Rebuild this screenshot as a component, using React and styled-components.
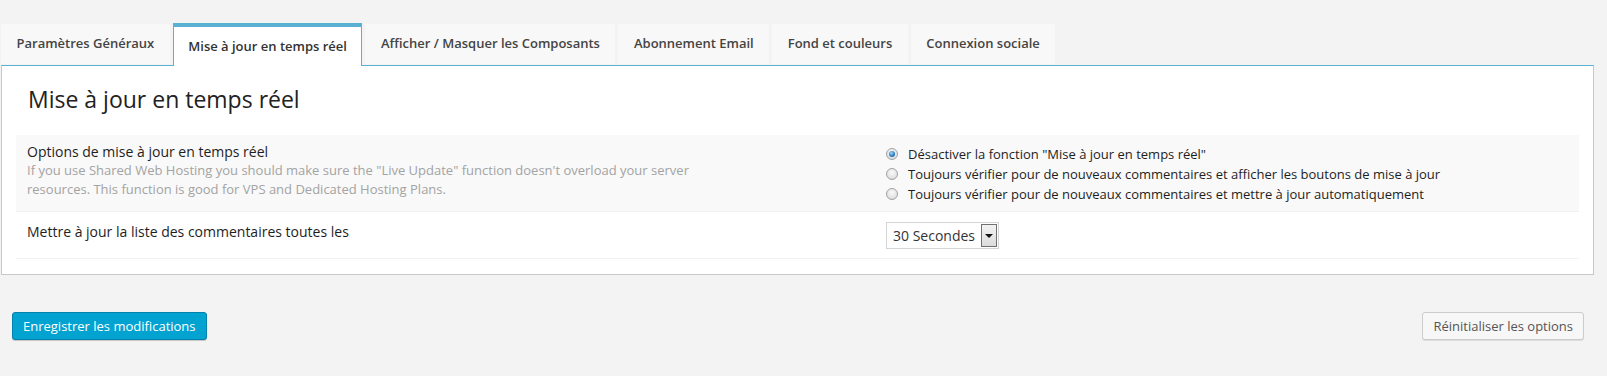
import React from "react";
import styled, { createGlobalStyle, css } from "styled-components";

const Global = createGlobalStyle`
  html, body { margin: 0; padding: 0; background: #f3f3f3; }
  body { font-family: "Open Sans", "Liberation Sans", sans-serif; color: #222; }
  * { box-sizing: border-box; }
`;

const Page = styled.div`
  padding: 23px 13px 0 1px;
  height: 376px;
`;

const TabList = styled.div`
  display: flex;
  align-items: flex-end;
  gap: 3px;
  height: 43px;
  margin-bottom: -1px;
  position: relative;
  z-index: 1;
`;

const Tab = styled.div`
  height: 40px;
  margin-bottom: 2px;
  padding: 0 15.5px 2px;
  display: flex;
  align-items: center;
  background: #f8f8f8;
  font-size: 13px;
  font-weight: 600;
  color: #444;
  white-space: nowrap;
  ${(p) =>
    p.$active &&
    css`
      height: 43px;
      margin-bottom: 0;
      background: #fff;
      border: 1px solid #5ab1d3;
      border-top-width: 4px;
      border-bottom: none;
      padding: 0 14.5px 1px;
      color: #333;
    `}
`;

const Panel = styled.div`
  background: #fff;
  border: 1px solid #c8c8c8;
  border-top-color: #5ab1d3;
  padding: 0 14px 15px;
`;

const Heading = styled.h2`
  margin: 0;
  padding: 18px 0 20px 12px;
  font-size: 23px;
  line-height: 31px;
  font-weight: 400;
  color: #222;
`;

const Row = styled.div`
  display: grid;
  grid-template-columns: 870px 1fr;
  background: ${(p) => (p.$shaded ? "#f9f9f9" : "#fff")};
  border-bottom: 1px solid #f1f1f1;
  padding: ${(p) => p.$pad};
`;

const LabelCell = styled.div`
  padding-left: 11px;
`;

const Label = styled.div`
  font-size: 14px;
  line-height: 19px;
  color: #1e1e1e;
`;

const Desc = styled.div`
  font-size: 13px;
  line-height: 19px;
  color: #a3a3a3;
  max-width: 720px;
`;

const RadioList = styled.div`
  display: flex;
  flex-direction: column;
  padding-top: 2px;
`;

const RadioItem = styled.label`
  display: flex;
  align-items: center;
  height: 20px;
  font-size: 13px;
  color: #1e1e1e;
  gap: 10px;
`;

const RadioDot = styled.span`
  width: 12px;
  height: 12px;
  border-radius: 50%;
  border: 1px solid #a2a2a2;
  background: radial-gradient(circle at 50% 35%, #fafafa 0%, #e4e4e4 60%, #cfcfcf 100%);
  position: relative;
  flex: none;
  ${(p) =>
    p.$checked &&
    css`
      &::after {
        content: "";
        position: absolute;
        inset: 2px;
        border-radius: 50%;
        background: radial-gradient(circle at 40% 35%, #a6d8f7 0%, #2d7fc2 55%, #173f72 100%);
      }
    `}
`;

const Select = styled.div`
  display: inline-flex;
  align-items: stretch;
  width: 113px;
  height: 27px;
  border: 1px solid #d4d4d4;
  background: #fff;
  padding: 1px;
`;

const SelectText = styled.span`
  flex: 1;
  display: flex;
  align-items: center;
  padding-left: 5px;
  font-size: 14px;
  color: #333;
`;

const SelectArrow = styled.span`
  width: 16px;
  border: 1px solid #707070;
  background: linear-gradient(#f2f2f2, #dcdcdc);
  display: flex;
  align-items: center;
  justify-content: center;
  &::after {
    content: "";
    border-left: 4px solid transparent;
    border-right: 4px solid transparent;
    border-top: 4px solid #111;
  }
`;

const Actions = styled.div`
  display: flex;
  justify-content: space-between;
  align-items: flex-start;
  padding: 37px 10px 0 11px;
`;

const Button = styled.button`
  height: 28px;
  padding: 0 10px;
  font-family: "Open Sans", "Liberation Sans", sans-serif;
  font-size: 13px;
  line-height: 26px;
  white-space: nowrap;
  border-radius: 3px;
  cursor: pointer;
  ${(p) =>
    p.$primary
      ? css`
          background: #03a3d1;
          border: 1px solid #0082ad;
          color: #fff;
          box-shadow: 0 1px 0 rgba(0, 0, 0, 0.18);
        `
      : css`
          background: #f7f7f7;
          border: 1px solid #ccc;
          color: #555;
          box-shadow: 0 1px 0 #ddd;
        `}
`;

const tabs = [
  "Paramètres Généraux",
  "Mise à jour en temps réel",
  "Afficher / Masquer les Composants",
  "Abonnement Email",
  "Fond et couleurs",
  "Connexion sociale",
];

const radios = [
  'Désactiver la fonction "Mise à jour en temps réel"',
  "Toujours vérifier pour de nouveaux commentaires et afficher les boutons de mise à jour",
  "Toujours vérifier pour de nouveaux commentaires et mettre à jour automatiquement",
];

export default function App() {
  return (
    <Page>
      <Global />
      <TabList>
        {tabs.map((t, i) => (
          <Tab key={t} $active={i === 1}>
            {t}
          </Tab>
        ))}
      </TabList>
      <Panel>
        <Heading>Mise à jour en temps réel</Heading>
        <Row $shaded $pad="7px 0 7px">
          <LabelCell>
            <Label>Options de mise à jour en temps réel</Label>
            <Desc>
              If you use Shared Web Hosting you should make sure the "Live Update" function doesn't
              overload your server resources. This function is good for VPS and Dedicated Hosting Plans.
            </Desc>
          </LabelCell>
          <RadioList>
            {radios.map((r, i) => (
              <RadioItem key={i}>
                <RadioDot $checked={i === 0} />
                <span>{r}</span>
              </RadioItem>
            ))}
          </RadioList>
        </Row>
        <Row $pad="10px 0 9px">
          <LabelCell>
            <Label>Mettre à jour la liste des commentaires toutes les</Label>
          </LabelCell>
          <div>
            <Select>
              <SelectText>30 Secondes</SelectText>
              <SelectArrow />
            </Select>
          </div>
        </Row>
      </Panel>
      <Actions>
        <Button $primary>Enregistrer les modifications</Button>
        <Button>Réinitialiser les options</Button>
      </Actions>
    </Page>
  );
}
